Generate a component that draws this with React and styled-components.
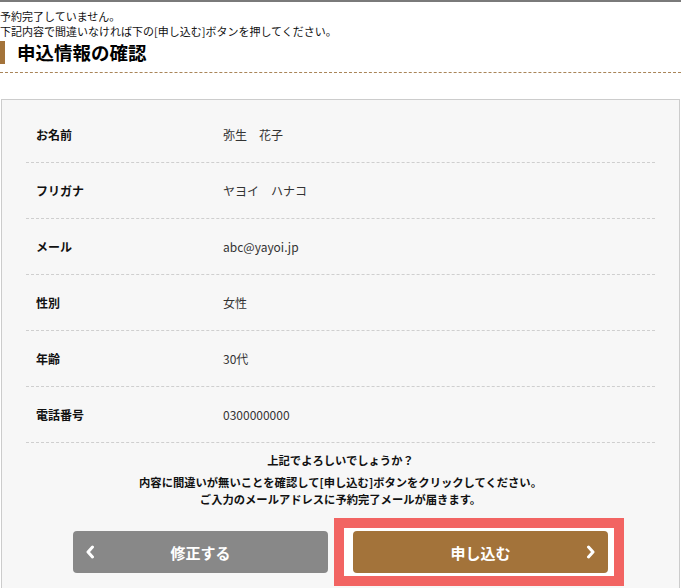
import React from 'react';
import styled, { createGlobalStyle } from 'styled-components';

const GlobalStyle = createGlobalStyle`
  html, body {
    margin: 0;
    padding: 0;
    overflow: hidden;
    background: #fff;
  }
  body {
    font-family: "Noto Sans CJK JP", "Noto Sans", sans-serif;
    color: #000;
  }
`;

const Page = styled.div`
  width: 681px;
  border-top: 2px solid #7a7a7a;
`;

const Notice = styled.p`
  margin: 0;
  padding-top: 7px;
  font-size: 11px;
  line-height: 15px;
  color: #111;
`;

const Heading = styled.h2`
  margin: 2px 0 0;
  padding: 0 0 8px 17px;
  position: relative;
  font-size: 18.5px;
  line-height: 23px;
  font-weight: 700;
  border-bottom: 1px dashed #a98559;

  &::before {
    content: '';
    position: absolute;
    left: 0;
    top: 0;
    width: 5px;
    height: 23px;
    background: #a3733a;
  }
`;

const Panel = styled.section`
  margin: 26px 1px 0;
  border: 1px solid #cccccc;
  background: #f7f7f7;
  padding: 7px 24px 0;
`;

const Row = styled.div`
  display: flex;
  align-items: center;
  height: 55px;
  padding-left: 10px;
  border-bottom: 1px dashed #cfcfcf;
  font-size: 12px;
`;

const Label = styled.div`
  width: 187px;
  font-weight: 700;
  color: #111;
`;

const Value = styled.div`
  color: #333;
`;

const Confirm = styled.div`
  text-align: center;
  font-size: 11.3px;
  font-weight: 700;
  color: #111;
  padding-top: 9px;
`;

const Question = styled.p`
  margin: 0 0 5px;
  line-height: 17px;
`;

const Note = styled.p`
  margin: 0;
  line-height: 17px;
`;

const Buttons = styled.div`
  display: flex;
  justify-content: center;
  gap: 25px;
  margin-top: 23px;
  padding-bottom: 30px;
`;

const Highlight = styled.div`
  position: relative;

  &::before {
    content: '';
    position: absolute;
    top: -13px;
    left: -19px;
    right: -16px;
    bottom: -13px;
    border: 10px solid #f26462;
    background: #fff;
  }
`;

const Button = styled.button`
  position: relative;
  display: flex;
  align-items: center;
  justify-content: center;
  width: 255px;
  height: 42px;
  border: 0;
  border-radius: 4px;
  background: ${({ $primary }) => ($primary ? '#a3733a' : '#888888')};
  color: #fff;
  font-family: inherit;
  font-size: 15px;
  font-weight: 700;
  cursor: pointer;
`;

const Chevron = styled.svg`
  position: absolute;
  top: 50%;
  ${({ $side }) => ($side === 'left' ? 'left: 12px;' : 'right: 12px;')}
  width: 10px;
  height: 14px;
  transform: translateY(-50%);
`;

const rows = [
  ['お名前', '弥生　花子'],
  ['フリガナ', 'ヤヨイ　ハナコ'],
  ['メール', 'abc@yayoi.jp'],
  ['性別', '女性'],
  ['年齢', '30代'],
  ['電話番号', '0300000000'],
];

const App = () => (
  <Page>
    <GlobalStyle />
    <Notice>
      予約完了していません。
      <br />
      下記内容で間違いなければ下の[申し込む]ボタンを押してください。
    </Notice>
    <Heading>申込情報の確認</Heading>

    <Panel>
      {rows.map(([label, value]) => (
        <Row key={label}>
          <Label>{label}</Label>
          <Value>{value}</Value>
        </Row>
      ))}

      <Confirm>
        <Question>上記でよろしいでしょうか？</Question>
        <Note>内容に間違いが無いことを確認して[申し込む]ボタンをクリックしてください。</Note>
        <Note>ご入力のメールアドレスに予約完了メールが届きます。</Note>
      </Confirm>

      <Buttons>
        <Button type="button">
          <Chevron $side="left" viewBox="0 0 10 14">
            <path d="M7.5 2 L3 7 L7.5 12" fill="none" stroke="#fff" strokeWidth="3" strokeLinecap="round" strokeLinejoin="round" />
          </Chevron>
          修正する
        </Button>
        <Highlight>
          <Button type="button" $primary>
            申し込む
            <Chevron $side="right" viewBox="0 0 10 14">
              <path d="M2.5 2 L7 7 L2.5 12" fill="none" stroke="#fff" strokeWidth="3" strokeLinecap="round" strokeLinejoin="round" />
            </Chevron>
          </Button>
        </Highlight>
      </Buttons>
    </Panel>
  </Page>
);

export default App;
